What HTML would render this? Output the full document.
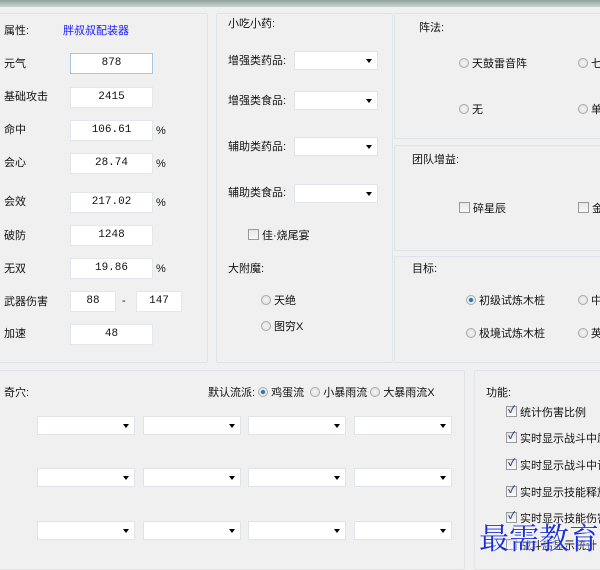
<!DOCTYPE html>
<html><head><meta charset="utf-8"><style>
*{margin:0;padding:0;box-sizing:border-box}
body{width:600px;height:565px;background:#f0f0f0;position:relative;overflow:hidden;font-family:"Liberation Sans","Noto Sans CJK SC",sans-serif;font-size:11px;color:#111}
.a{position:absolute;white-space:nowrap;line-height:14px}
.top{position:absolute;left:0;top:0;width:600px;height:7px;background:linear-gradient(#8fa39a,#c9d3cf)}
.p{position:absolute;border:1px solid #dfe4e8;border-radius:2px;background:#f0f0f0}
.in{position:absolute;height:21px;background:#fff;border:1px solid #e3e6ea;text-align:center;font-family:"Liberation Mono",monospace;font-size:11px;line-height:19px}
.sel{position:absolute;height:19px;background:#fff;border:1px solid #e0e3e7}
.sel:after{content:"";position:absolute;right:5px;top:7px;border:3.5px solid transparent;border-top:4px solid #000}
.r{display:inline-block;width:10px;height:10px;border-radius:50%;border:1px solid #a9a9a9;background:radial-gradient(#f4f4f4,#dcdcdc);vertical-align:-1px;margin-right:3px}
.r.on{background:radial-gradient(#2a6fb8 30%,#e8eef5 45%)}
.c{display:inline-block;width:11px;height:11px;border:1px solid #9a9a9a;background:linear-gradient(#e6e6e6,#fafafa);vertical-align:-1px;margin-right:3px;position:relative}
.c.on:after{content:"✓";position:absolute;left:1px;top:-3px;font-size:10px;color:#2b4f8c;font-weight:bold}
</style></head><body>
<div class="top"></div>
<div class="p" style="left:-2px;top:13px;width:210px;height:350px"></div>
<div class="p" style="left:216px;top:13px;width:177px;height:350px"></div>
<div class="p" style="left:394px;top:13px;width:210px;height:126px"></div>
<div class="p" style="left:394px;top:145px;width:210px;height:106px"></div>
<div class="p" style="left:394px;top:256px;width:210px;height:107px"></div>
<div class="p" style="left:-2px;top:370px;width:467px;height:200px"></div>
<div class="p" style="left:474px;top:370px;width:130px;height:200px"></div>

<div class="a" style="left:4px;top:24px">属性:</div>
<div class="a" style="left:63px;top:24px;color:#1a1aff">胖叔叔配装器</div>
<div class="a" style="left:4px;top:57px">元气</div><div class="in" style="left:70px;top:53px;width:83px;border-color:#a9c6e2">878</div>
<div class="a" style="left:4px;top:90px">基础攻击</div><div class="in" style="left:70px;top:87px;width:83px">2415</div>
<div class="a" style="left:4px;top:123px">命中</div><div class="in" style="left:70px;top:120px;width:83px">106.61</div><div class="a" style="left:156px;top:124px">%</div>
<div class="a" style="left:4px;top:156px">会心</div><div class="in" style="left:70px;top:153px;width:83px">28.74</div><div class="a" style="left:156px;top:157px">%</div>
<div class="a" style="left:4px;top:195px">会效</div><div class="in" style="left:70px;top:192px;width:83px">217.02</div><div class="a" style="left:156px;top:196px">%</div>
<div class="a" style="left:4px;top:229px">破防</div><div class="in" style="left:70px;top:225px;width:83px">1248</div>
<div class="a" style="left:4px;top:262px">无双</div><div class="in" style="left:70px;top:258px;width:83px">19.86</div><div class="a" style="left:156px;top:262px">%</div>
<div class="a" style="left:4px;top:295px">武器伤害</div><div class="in" style="left:70px;top:291px;width:46px">88</div><div class="a" style="left:122px;top:294px">-</div><div class="in" style="left:136px;top:291px;width:46px">147</div>
<div class="a" style="left:4px;top:327px">加速</div><div class="in" style="left:70px;top:324px;width:83px">48</div>

<div class="a" style="left:228px;top:17px">小吃小药:</div>
<div class="a" style="left:228px;top:54px">增强类药品:</div><div class="sel" style="left:294px;top:51px;width:84px"></div>
<div class="a" style="left:228px;top:94px">增强类食品:</div><div class="sel" style="left:294px;top:91px;width:84px"></div>
<div class="a" style="left:228px;top:140px">辅助类药品:</div><div class="sel" style="left:294px;top:137px;width:84px"></div>
<div class="a" style="left:228px;top:186px">辅助类食品:</div><div class="sel" style="left:294px;top:184px;width:84px"></div>
<div class="a" style="left:248px;top:229px"><span class="c"></span>佳·烧尾宴</div>
<div class="a" style="left:228px;top:262px">大附魔:</div>
<div class="a" style="left:261px;top:294px"><span class="r"></span>天绝</div>
<div class="a" style="left:261px;top:320px"><span class="r"></span>图穷X</div>

<div class="a" style="left:419px;top:21px">阵法:</div>
<div class="a" style="left:459px;top:57px"><span class="r"></span>天鼓雷音阵</div>
<div class="a" style="left:578px;top:57px"><span class="r"></span>七</div>
<div class="a" style="left:459px;top:103px"><span class="r"></span>无</div>
<div class="a" style="left:578px;top:103px"><span class="r"></span>单</div>
<div class="a" style="left:412px;top:153px">团队增益:</div>
<div class="a" style="left:459px;top:202px"><span class="c"></span>碎星辰</div>
<div class="a" style="left:578px;top:202px"><span class="c"></span>金</div>
<div class="a" style="left:412px;top:262px">目标:</div>
<div class="a" style="left:466px;top:294px"><span class="r on"></span>初级试炼木桩</div>
<div class="a" style="left:578px;top:294px"><span class="r"></span>中</div>
<div class="a" style="left:466px;top:327px"><span class="r"></span>极境试炼木桩</div>
<div class="a" style="left:578px;top:327px"><span class="r"></span>英</div>

<div class="a" style="left:4px;top:386px">奇穴:</div>
<div class="a" style="left:208px;top:386px">默认流派: <span class="r on"></span>鸡蛋流 &nbsp;<span class="r"></span>小暴雨流 <span class="r"></span>大暴雨流X</div>
<div class="sel" style="left:37px;top:416px;width:98px"></div><div class="sel" style="left:143px;top:416px;width:98px"></div><div class="sel" style="left:248px;top:416px;width:98px"></div><div class="sel" style="left:354px;top:416px;width:98px"></div>
<div class="sel" style="left:37px;top:468px;width:98px"></div><div class="sel" style="left:143px;top:468px;width:98px"></div><div class="sel" style="left:248px;top:468px;width:98px"></div><div class="sel" style="left:354px;top:468px;width:98px"></div>
<div class="sel" style="left:37px;top:521px;width:98px"></div><div class="sel" style="left:143px;top:521px;width:98px"></div><div class="sel" style="left:248px;top:521px;width:98px"></div><div class="sel" style="left:354px;top:521px;width:98px"></div>

<div class="a" style="left:486px;top:386px">功能:</div>
<div class="a" style="left:506px;top:406px"><span class="c on"></span>统计伤害比例</div>
<div class="a" style="left:506px;top:432px"><span class="c on"></span>实时显示战斗中属性</div>
<div class="a" style="left:506px;top:459px"><span class="c on"></span>实时显示战斗中计时</div>
<div class="a" style="left:506px;top:486px"><span class="c on"></span>实时显示技能释放</div>
<div class="a" style="left:506px;top:512px"><span class="c on"></span>实时显示技能伤害</div>
<div class="a" style="left:506px;top:539px"><span class="c"></span>战斗后显示统计</div>
<div class="a" style="left:479px;top:518px;font-family:'Noto Serif CJK SC',serif;font-size:30px;line-height:36px;color:#1b2fd6;text-shadow:0 0 2px #fff,0 0 2px #fff">最需教育</div>
</body></html>
